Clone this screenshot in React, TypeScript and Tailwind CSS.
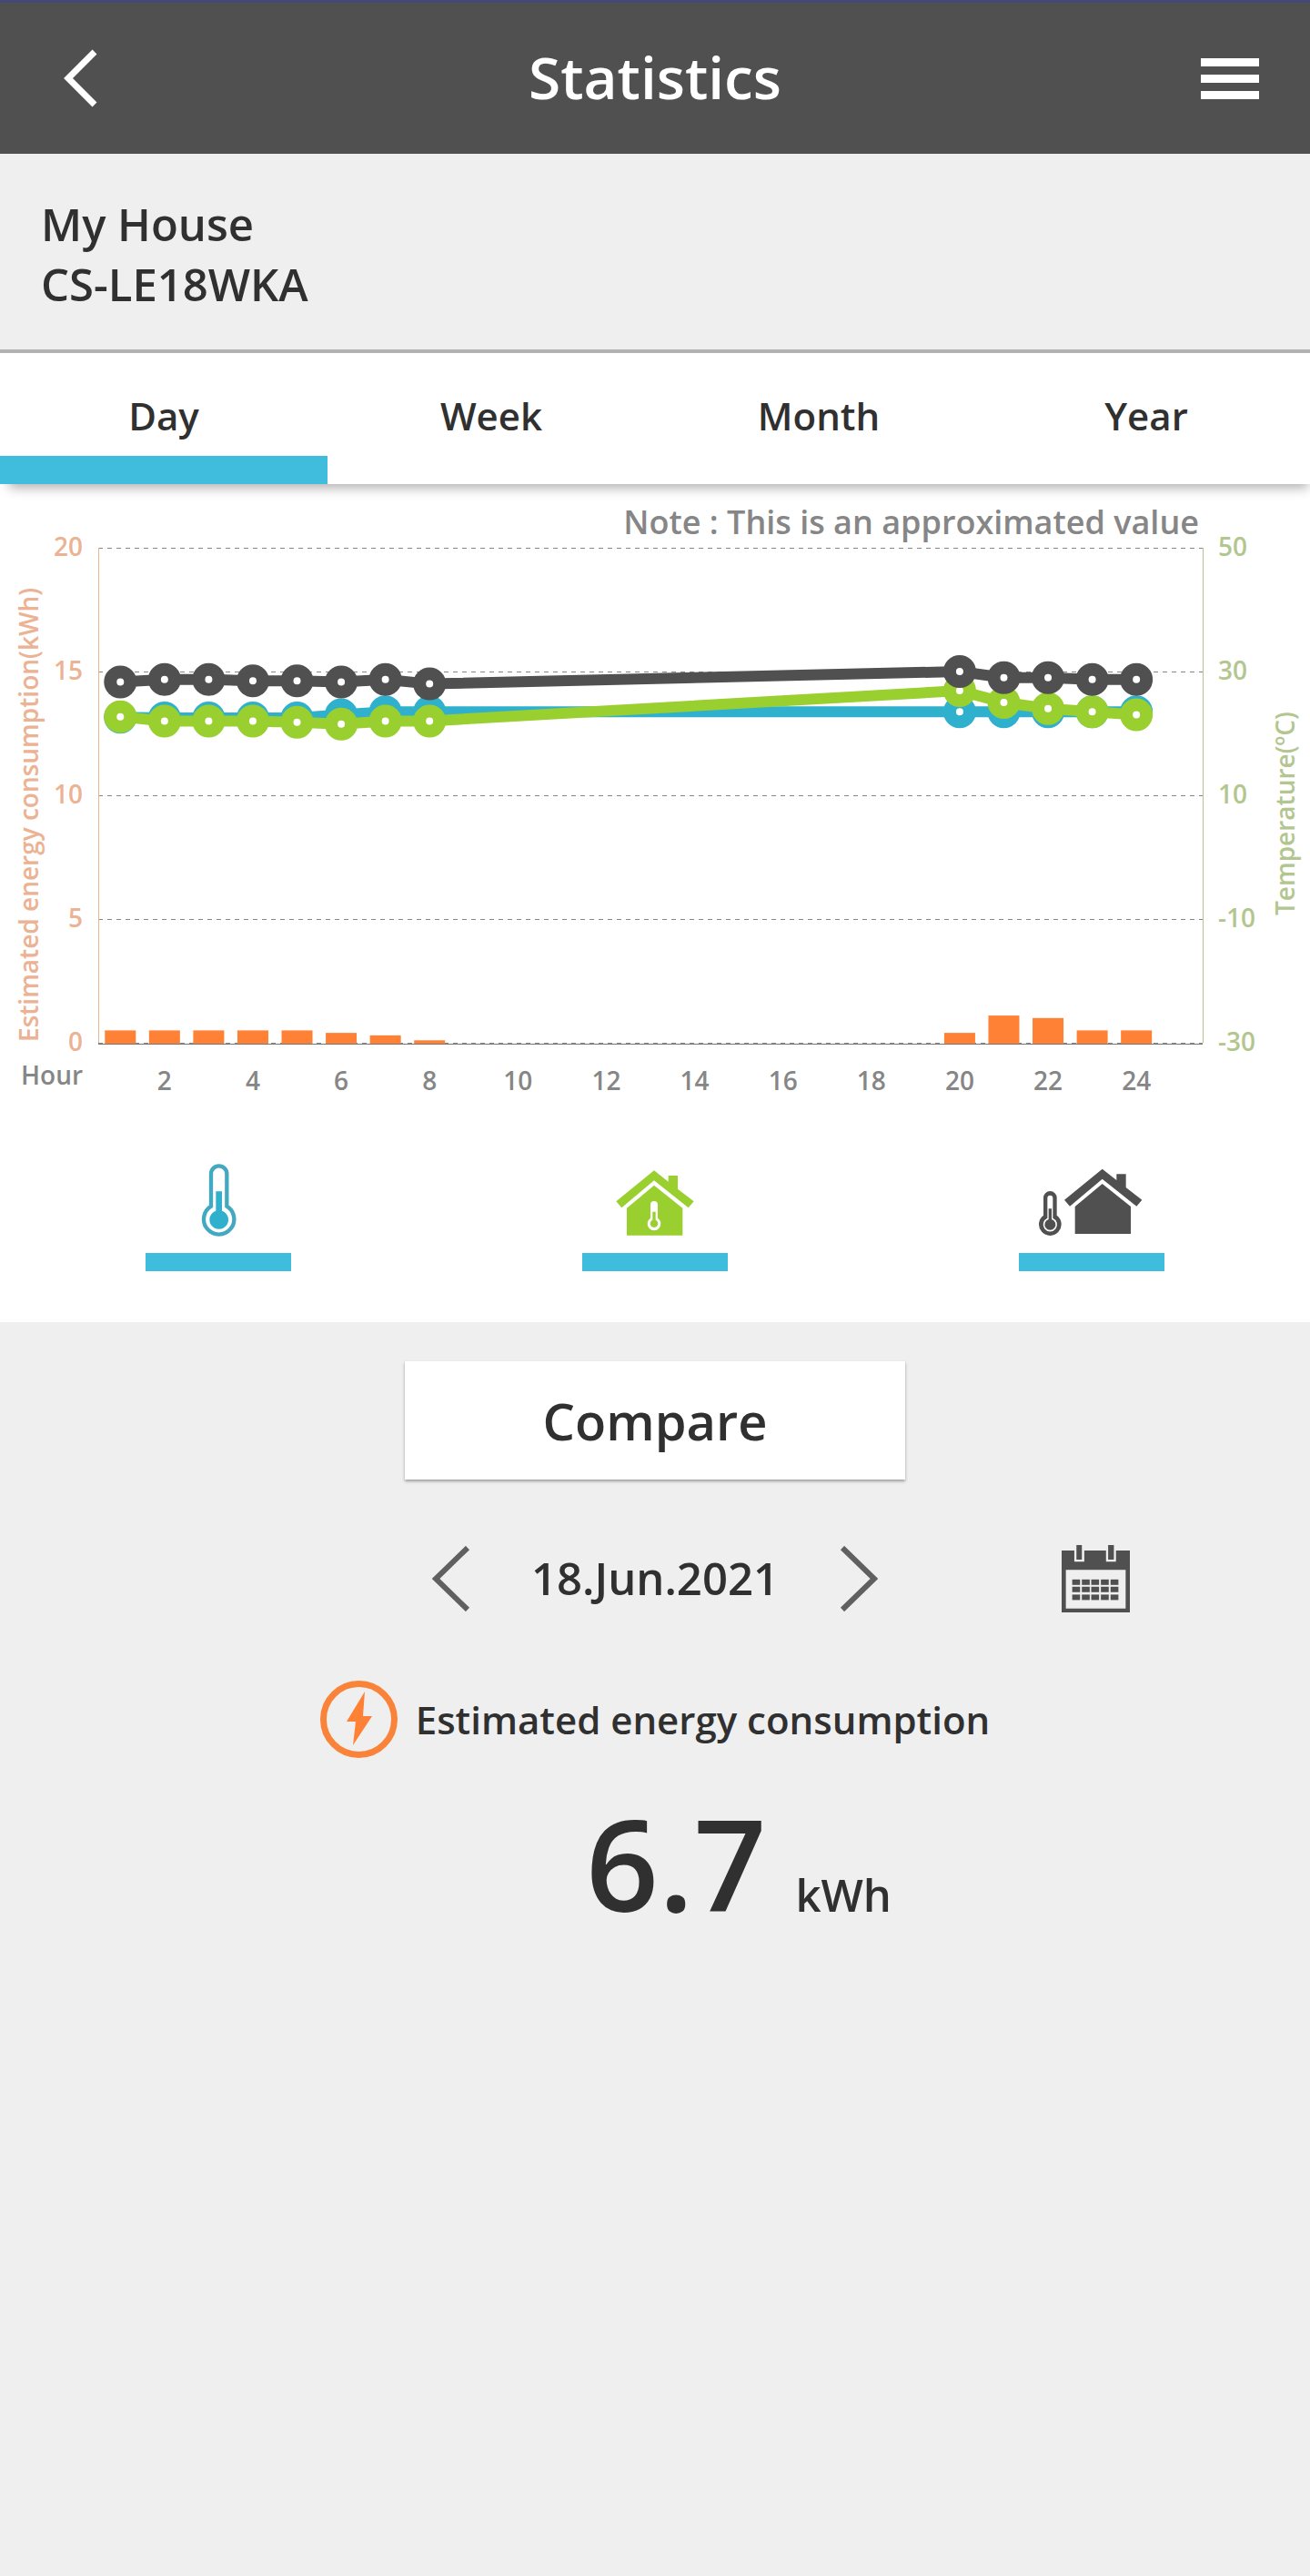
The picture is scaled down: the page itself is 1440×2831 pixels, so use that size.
import { useState } from "react";

const TABS = ["Day", "Week", "Month", "Year"];

// Hourly readings, only for the hours where the unit was running
const readings = [
  { hour: 1, energy: 0.5, set: 22.6, inside: 22.7, outside: 28.3 },
  { hour: 2, energy: 0.5, set: 22.5, inside: 22, outside: 28.7 },
  { hour: 3, energy: 0.5, set: 22.5, inside: 22, outside: 28.7 },
  { hour: 4, energy: 0.5, set: 22.5, inside: 22, outside: 28.5 },
  { hour: 5, energy: 0.5, set: 22.5, inside: 21.8, outside: 28.5 },
  { hour: 6, energy: 0.4, set: 23, inside: 21.5, outside: 28.3 },
  { hour: 7, energy: 0.3, set: 23.5, inside: 22, outside: 28.7 },
  { hour: 8, energy: 0.1, set: 23.5, inside: 22, outside: 28 },
  { hour: 20, energy: 0.4, set: 23.5, inside: 26.9, outside: 30 },
  { hour: 21, energy: 1.1, set: 23.5, inside: 25, outside: 29 },
  { hour: 22, energy: 1, set: 23.5, inside: 24, outside: 29 },
  { hour: 23, energy: 0.5, set: 23.5, inside: 23.5, outside: 28.7 },
  { hour: 24, energy: 0.5, set: 23.5, inside: 23, outside: 28.7 },
];

type SeriesKey = "set" | "inside" | "outside";

const SERIES: { key: SeriesKey; color: string }[] = [
  { key: "set", color: "#2fb1cd" },
  { key: "inside", color: "#99cf2f" },
  { key: "outside", color: "#505050" },
];

const GRID = [
  { energy: 20, temp: 50 },
  { energy: 15, temp: 30 },
  { energy: 10, temp: 10 },
  { energy: 5, temp: -10 },
  { energy: 0, temp: -30 },
];

// Plot area
const LEFT = 108;
const RIGHT = 1322;
const TOP = 10;
const BOTTOM = 554;

const hourX = (hour: number) => LEFT + ((RIGHT - LEFT) / 25) * (hour - 0.5);
const energyY = (value: number) => BOTTOM - ((BOTTOM - TOP) / 20) * value;
const tempY = (value: number) => BOTTOM - ((BOTTOM - TOP) / 80) * (value + 30);

const Chart = ({ visible }: { visible: Record<SeriesKey, boolean> }) => (
  <svg viewBox="0 0 1440 624" className="block w-full h-auto overflow-visible text-[28px] font-semibold" role="img" aria-label="Energy consumption and temperature by hour">
    {GRID.map(({ energy, temp }) => (
      <g key={energy}>
        <line x1={LEFT} x2={RIGHT} y1={energyY(energy) + 0.5} y2={energyY(energy) + 0.5} stroke="#868686" strokeDasharray="5 5" />
        <text x="91" y={energyY(energy) + 9} textAnchor="end" fill="#ebb293">{energy}</text>
        <text x="1339" y={energyY(energy) + 9} fill="#b3c68f">{temp}</text>
      </g>
    ))}
    <line x1={LEFT + 0.5} x2={LEFT + 0.5} y1={TOP} y2={BOTTOM} stroke="#ebb293" />
    <line x1={RIGHT + 0.5} x2={RIGHT + 0.5} y1={TOP} y2={BOTTOM} stroke="#b3c68f" />

    {/* Energy bars */}
    {readings.map(({ hour, energy }) => (
      <rect key={hour} x={hourX(hour) - 17} y={energyY(energy)} width="34" height={BOTTOM + 1 - energyY(energy)} fill="#ff8135" />
    ))}
    <line x1={LEFT} x2={RIGHT} y1={BOTTOM + 1.5} y2={BOTTOM + 1.5} stroke="#777777" />

    {/* Temperature lines */}
    {SERIES.filter(({ key }) => visible[key]).map(({ key, color }) => (
      <g key={key}>
        <polyline points={readings.map((r) => `${hourX(r.hour)},${tempY(r[key])}`).join(" ")} fill="none" stroke={color} strokeWidth="12" />
        {readings.map((r) => (
          <circle key={r.hour} cx={hourX(r.hour)} cy={tempY(r[key])} r="11" fill="white" stroke={color} strokeWidth="14" />
        ))}
      </g>
    ))}

    {[2, 4, 6, 8, 10, 12, 14, 16, 18, 20, 22, 24].map((hour) => (
      <text key={hour} x={hourX(hour)} y="606" textAnchor="middle" fill="#868686">{hour}</text>
    ))}
    <text x="23" y="600" fill="#868686">Hour</text>
    <text transform="translate(42 553) rotate(-90)" fill="#ebb293">Estimated energy consumption(kWh)</text>
    <text transform="translate(1423 414) rotate(-90)" fill="#b3c68f">Temperature(ºC)</text>
  </svg>
);

const ThermometerIcon = () => (
  <svg viewBox="0 0 480 270" className="w-40 h-[90px]" aria-hidden="true">
    <path d="M216 164V57a26 26 0 0 1 52 0V164A50 50 0 1 1 216 164Z" fill="none" stroke="#43a9c1" strokeWidth="13" />
    <path d="M232 115h20v64a31 31 0 1 1-20 0Z" fill="#2fb1cd" />
  </svg>
);

const HousePath = () => (
  <>
    <path d="M237 46 284 83V63h31v44l53 41-18 21L237 79 130 169l-18-21Z" />
    <path d="M237 95 331 170V260H147V170Z" />
  </>
);

const IndoorIcon = () => (
  <svg viewBox="0 0 480 270" className="w-40 h-[90px]" fill="#99cf2f" aria-hidden="true">
    <HousePath />
    <path d="M225 203V159a12 12 0 0 1 24 0V203A22 22 0 1 1 225 203Z" fill="white" />
    <path d="M232 182h10v27a13 13 0 1 1-10 0Z" />
  </svg>
);

const OutdoorIcon = () => (
  <svg viewBox="0 0 480 270" className="w-40 h-[90px]" fill="#505050" aria-hidden="true">
    <g transform="translate(38 -5)">
      <HousePath />
    </g>
    <path d="M81 194V136a22 22 0 0 1 44 0V194A37 37 0 1 1 81 194Z" />
    <path d="M94 203V137a9 9 0 0 1 18 0V203A23 23 0 1 1 94 203Z" fill="white" />
    <path d="M98 172h10v35a18 18 0 1 1-10 0Z" />
  </svg>
);

const CalendarIcon = () => (
  <svg viewBox="0 0 226 223" className="w-[75px] h-[74px]" fill="#505050" aria-hidden="true">
    <path d="M0 18H226V223H0Z" />
    <path d="M14 82H212V210H14ZM42 0H75V55H42ZM147 0H180V55H147Z" fill="#efefef" />
    <path d="M49 0H67V48H49ZM154 0H173V48H154Z" />
    {[114, 138, 164].map((y) =>
      [35, 67, 98, 130, 162].map((x) => <rect key={`${x}-${y}`} x={x} y={y} width="26" height="18" />)
    )}
  </svg>
);

const LEGEND: { key: SeriesKey; label: string; Icon: () => React.JSX.Element }[] = [
  { key: "set", label: "Set temperature", Icon: ThermometerIcon },
  { key: "inside", label: "Inside temperature", Icon: IndoorIcon },
  { key: "outside", label: "Outside temperature", Icon: OutdoorIcon },
];

const App = () => {
  const [activeTab, setActiveTab] = useState("Day");
  const [visible, setVisible] = useState({ set: true, inside: true, outside: true });

  const toggleSeries = (key: SeriesKey) => {
    setVisible({ ...visible, [key]: !visible[key] });
  };

  return (
    <div className="min-h-screen bg-[#efefef] font-['Open_Sans',sans-serif] font-semibold text-[#303030]">
      <header className="grid grid-cols-[1fr_auto_1fr] items-center h-[169px] px-14 bg-[#505050] border-t-3 border-[#434a77] text-white">
        <button type="button" aria-label="Back" className="justify-self-start pl-3.5">
          <svg viewBox="0 0 37 64" className="w-[37px] h-16" fill="none" stroke="currentColor" strokeWidth="7">
            <path d="M34 3 5 32 34 61" />
          </svg>
        </button>
        <h1 className="pb-0.5 text-[64px] leading-none">Statistics</h1>
        <button type="button" aria-label="Menu" className="justify-self-end flex flex-col gap-[9px] w-16">
          <span className="w-full h-[9px] bg-white" />
          <span className="w-full h-[9px] bg-white" />
          <span className="w-full h-[9px] bg-white" />
        </button>
      </header>

      <section className="px-[45px] pt-11 pb-[39px] border-b-4 border-[#b2b2b2] text-[49px] leading-[66px]">
        <p>My House</p>
        <p>CS-LE18WKA</p>
      </section>

      <nav className="relative grid grid-cols-4 h-36 bg-white shadow-[4px_10px_12px_-6px_rgba(0,0,0,0.32)]">
        {TABS.map((tab) => (
          <button key={tab} type="button" onClick={() => setActiveTab(tab)} className="relative pb-2 text-[42px]">
            {tab}
            {activeTab === tab && <span className="absolute inset-x-0 bottom-0 h-[31px] bg-[#40bcdc]" />}
          </button>
        ))}
      </nav>

      <section className="bg-white">
        <p className="pt-6 pr-[122px] text-right text-4xl leading-9 text-[#868686]">Note : This is an approximated value</p>
        <Chart visible={visible} />
        <div className="grid grid-cols-3 pt-[55px] pb-14">
          {LEGEND.map(({ key, label, Icon }) => (
            <button key={key} type="button" aria-label={label} aria-pressed={visible[key]} onClick={() => toggleSeries(key)} className="flex flex-col items-center gap-4">
              <Icon />
              <span className={visible[key] ? "w-40 h-5 bg-[#40bcdc]" : "w-40 h-5 bg-gray-300"} />
            </button>
          ))}
        </div>
      </section>

      <main className="flex flex-col items-center pt-[43px]">
        <button type="button" className="w-[550px] h-[130px] bg-white shadow-[0_2px_3px_rgba(0,0,0,0.35)] text-[56px]">
          Compare
        </button>

        <div className="grid grid-cols-[1fr_auto_1fr] items-center w-full mt-[71px] h-[76px]">
          <div className="col-start-2 flex items-center justify-between w-[490px]">
            <button type="button" aria-label="Previous day">
              <svg viewBox="0 0 42 72" className="w-[42px] h-[72px]" fill="none" stroke="#606060" strokeWidth="6">
                <path d="M39 2 4 36 39 70" />
              </svg>
            </button>
            <span className="text-[49px]">18.Jun.2021</span>
            <button type="button" aria-label="Next day">
              <svg viewBox="0 0 42 72" className="w-[42px] h-[72px]" fill="none" stroke="#606060" strokeWidth="6">
                <path d="M3 2 38 36 3 70" />
              </svg>
            </button>
          </div>
          <button type="button" aria-label="Pick a date" className="justify-self-center pl-1">
            <CalendarIcon />
          </button>
        </div>

        <div className="flex items-center gap-5 mt-[74px]">
          <svg viewBox="0 0 85 85" className="w-[85px] h-[85px]" aria-hidden="true">
            <circle cx="42.5" cy="42.5" r="39" fill="none" stroke="#f98339" strokeWidth="7" />
            <path d="M49 12 29 45H39L36 71 57 39H47Z" fill="#ff8135" />
          </svg>
          <h2 className="text-[42px]">Estimated energy consumption</h2>
        </div>

        <p className="flex items-baseline gap-8 mt-[45px] pl-[184px] text-[140px] leading-none">
          6.7
          <span className="text-[49px] leading-none">kWh</span>
        </p>
      </main>
    </div>
  );
};

export default App;
